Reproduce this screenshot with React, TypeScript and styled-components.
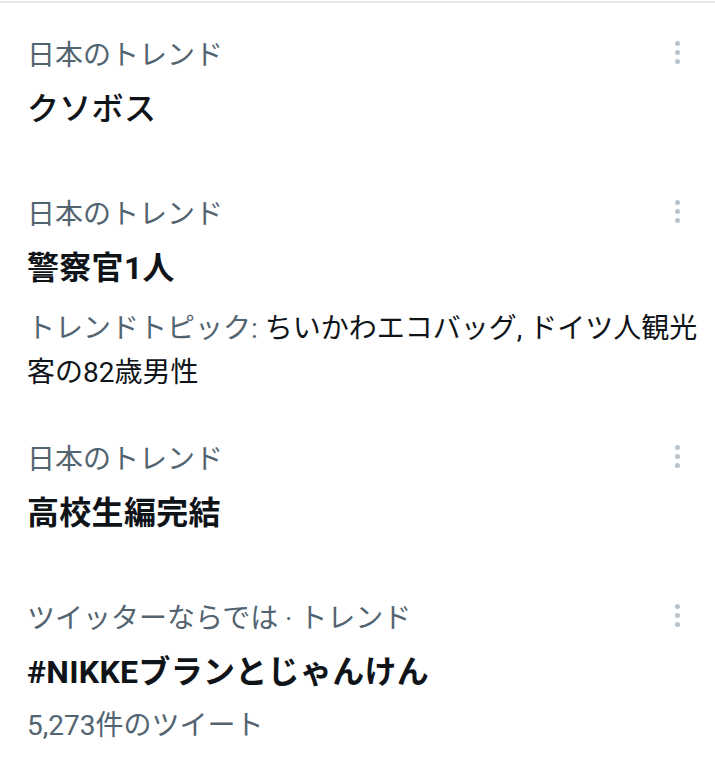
import React from "react";
import styled, { createGlobalStyle } from "styled-components";

const Global = createGlobalStyle`
  html, body { margin: 0; padding: 0; background: #ffffff; }
  body { font-family: Roboto, "Noto Sans CJK JP", sans-serif; -webkit-font-smoothing: antialiased; }
`;

const Page = styled.div`
  width: 715px;
  min-height: 776px;
  background: #fff;
  border-top: 2px solid #e6e9eb;
  margin-top: 1px;
  box-sizing: border-box;
  padding-top: 13px;
`;

const Item = styled.div<{ $pb: number }>`
  display: flex;
  flex-direction: column;
  padding: 22px 10px ${(p) => p.$pb}px 27px;
`;

const Header = styled.div`
  display: flex;
  align-items: flex-start;
  justify-content: space-between;
  padding-right: 18px;
`;

const Category = styled.div`
  font-size: 28px;
  line-height: 36px;
  color: #536471;
`;

const Title = styled.div<{ $weight?: number }>`
  font-size: 32px;
  line-height: 44px;
  font-weight: ${(p) => p.$weight ?? 700};
  color: #0f1419;
  margin-top: 13px;
  letter-spacing: 0.3px;
`;

const Desc = styled.div`
  font-size: 28px;
  line-height: 44px;
  color: #0f1419;
  margin-top: 17px;
`;

const Muted = styled.span`
  color: #536471;
`;

const Count = styled.div`
  font-size: 28px;
  line-height: 40px;
  color: #536471;
  margin-top: 12px;
`;

const More = styled.div`
  width: 20px;
  display: flex;
  flex-direction: column;
  align-items: center;
  gap: 4px;
  padding-top: 3px;
`;

const Dot = styled.span`
  width: 5px;
  height: 5px;
  border-radius: 50%;
  background: #b9c3cb;
`;

const Dots = () => (
  <More>
    <Dot />
    <Dot />
    <Dot />
  </More>
);

export default function App() {
  return (
    <>
      <Global />
      <Page>
        <Item $pb={44}>
          <Header>
            <Category>日本のトレンド</Category>
            <Dots />
          </Header>
          <Title $weight={500}>クソボス</Title>
        </Item>
        <Item $pb={25}>
          <Header>
            <Category>日本のトレンド</Category>
            <Dots />
          </Header>
          <Title>警察官1人</Title>
          <Desc>
            <Muted>トレンドトピック: </Muted>ちいかわエコバッグ, ドイツ人観光客の82歳男性
          </Desc>
        </Item>
        <Item $pb={44}>
          <Header>
            <Category>日本のトレンド</Category>
            <Dots />
          </Header>
          <Title>高校生編完結</Title>
        </Item>
        <Item $pb={22}>
          <Header>
            <Category>ツイッターならでは · トレンド</Category>
            <Dots />
          </Header>
          <Title>#NIKKEブランとじゃんけん</Title>
          <Count>5,273件のツイート</Count>
        </Item>
      </Page>
    </>
  );
}
